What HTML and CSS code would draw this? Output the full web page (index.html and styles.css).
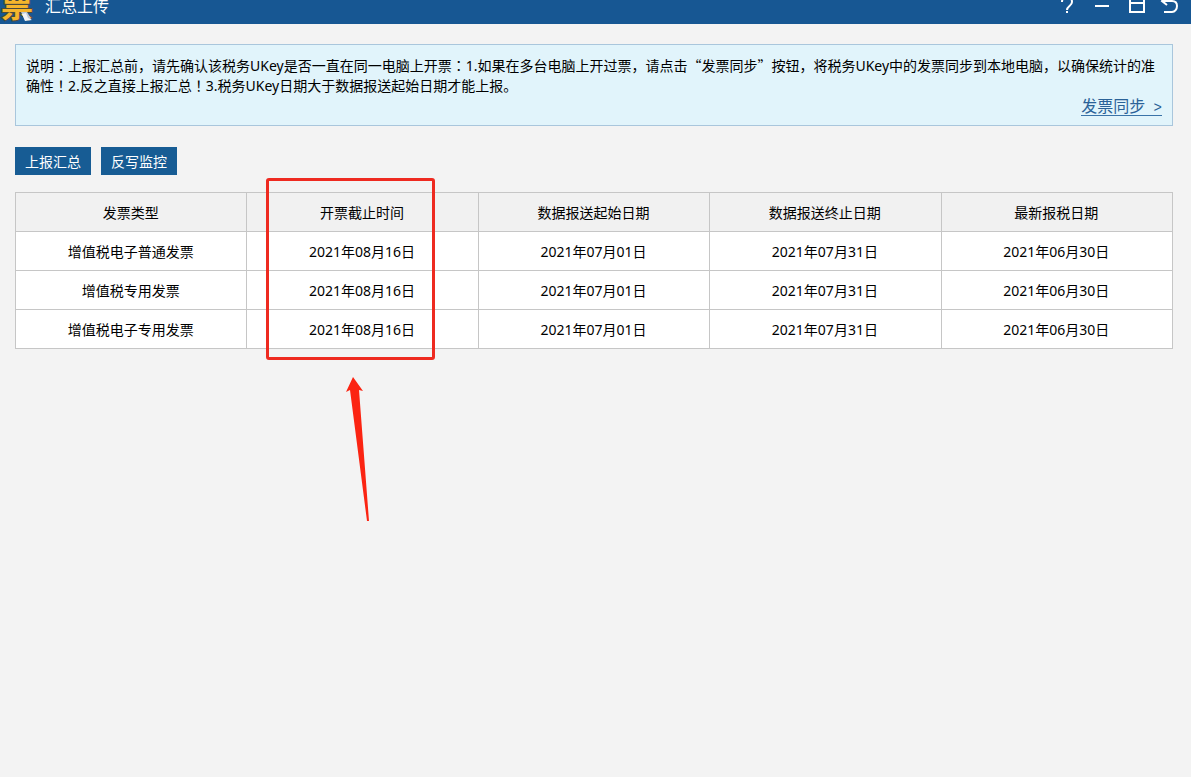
FILE: index.html
```html
<!DOCTYPE html>
<html lang="zh-CN">
<head>
<meta charset="utf-8">
<title>汇总上传</title>
<link rel="stylesheet" href="styles.css">
</head>
<body>
<header class="titlebar">
  <div class="titlebar-row">
    <svg class="logo" viewBox="0 0 34 36" aria-hidden="true">
      <text class="logo-char" x="1" y="29">票</text>
      <path d="M21 24h6l3 5 1 3h-6z" fill="#b9c9d8"/>
      <path d="M22 26l4-1 2 5 4 2-7 1z" fill="#f1f4f7"/>
    </svg>
    <h1 class="title">汇总上传</h1>
    <div class="window-controls">
      <button class="icon-button" type="button" aria-label="帮助">
        <svg viewBox="0 0 24 24"><path d="M7 8c0-3 2-5 5-5s5 2 5 5c0 4-5 4-5 8"/><path d="M12 17v2"/></svg>
      </button>
      <button class="icon-button" type="button" aria-label="最小化">
        <svg viewBox="0 0 24 24"><path d="M5 12h14"/></svg>
      </button>
      <button class="icon-button" type="button" aria-label="最大化">
        <svg viewBox="0 0 24 24"><path d="M5 3h14v15H5zM5 9h14"/></svg>
      </button>
      <button class="icon-button" type="button" aria-label="返回">
        <svg viewBox="0 0 24 24"><path d="M6 2L2 7l5 4M2 7h10c3 0 5 2 5 5s-2 6-5 6H4"/></svg>
      </button>
    </div>
  </div>
</header>

<main class="content">
  <section class="notice">
    <p class="notice-text">说明<span class="mid" lang="ja">：</span>上报汇总前，请先确认该税务UKey是否一直在同一电脑上开票<span class="mid" lang="ja">：</span>1.如果在多台电脑上开过票，请点击<span class="wide">“</span>发票同步<span class="wide">”</span>按钮，将税务UKey中的发票同步到本地电脑，以确保统计的准确性<span class="mid" lang="ja">！</span>2.反之直接上报汇总<span class="mid" lang="ja">！</span>3.税务UKey日期大于数据报送起始日期才能上报。</p>
    <a class="sync-link" href="#">发票同步<span class="chevron"> &gt;</span></a>
  </section>

  <div class="actions">
    <button class="action" type="button">上报汇总</button>
    <button class="action" type="button">反写监控</button>
  </div>

  <div class="table-wrap">
    <table class="report">
      <thead>
        <tr><th>发票类型</th><th>开票截止时间</th><th>数据报送起始日期</th><th>数据报送终止日期</th><th>最新报税日期</th></tr>
      </thead>
      <tbody>
        <tr><td>增值税电子普通发票</td><td>2021年08月16日</td><td>2021年07月01日</td><td>2021年07月31日</td><td>2021年06月30日</td></tr>
        <tr><td>增值税专用发票</td><td>2021年08月16日</td><td>2021年07月01日</td><td>2021年07月31日</td><td>2021年06月30日</td></tr>
        <tr><td>增值税电子专用发票</td><td>2021年08月16日</td><td>2021年07月01日</td><td>2021年07月31日</td><td>2021年06月30日</td></tr>
      </tbody>
    </table>
    <div class="highlight"></div>
    <svg class="pointer" viewBox="0 0 26 146" width="26" height="146" aria-hidden="true">
      <polygon class="pointer-shape" points="8,1 18,15 14,14 24,145 22,145 5,14 1,16"/>
    </svg>
  </div>
</main>
</body>
</html>
```
FILE: styles.css
```css
* {
  box-sizing: border-box;
}

body {
  min-height: 100vh;
  margin: 0;
  background: #f3f3f3;
  color: #000;
  font: 14px/20px "Noto Sans", "Noto Sans CJK SC", sans-serif;
}

button {
  border: 0;
  font: inherit;
  cursor: pointer;
}

.titlebar {
  height: 24px;
  overflow: hidden;
  background: #175793;
  color: #fff;
}

.titlebar-row {
  display: flex;
  align-items: center;
  height: 36px;
  margin-top: -12px;
  padding-right: 7px;
}

.logo {
  width: 34px;
  height: 36px;
}

.logo-char {
  font: 700 32px "Noto Sans CJK SC", sans-serif;
  fill: #f5b52c;
  stroke: #4b4a3c;
  stroke-width: 2px;
  paint-order: stroke;
}

.title {
  margin: 0 auto 0 11px;
  font-size: 16px;
  font-weight: 400;
  line-height: 24px;
}

.window-controls {
  display: flex;
  gap: 11px;
}

.icon-button {
  width: 24px;
  height: 24px;
  padding: 0;
  background: none;
  color: inherit;
}

.icon-button svg {
  display: block;
  width: 24px;
  height: 24px;
  fill: none;
  stroke: currentColor;
  stroke-width: 2px;
}

.content {
  padding: 20px 18px 20px 15px;
}

.notice {
  display: flex;
  flex-direction: column;
  padding: 11px 10px 9px;
  border: 1px solid #a9c6dc;
  background: #e1f4fb;
}

.notice-text {
  margin: 0;
}

.mid {
  font-family: "Noto Sans CJK JP", sans-serif;
  line-height: 1;
}

.wide {
  font-family: "Noto Sans CJK SC", sans-serif;
  line-height: 1;
}

.sync-link {
  align-self: flex-end;
  height: 20px;
  border-bottom: 1px solid #3a73a8;
  color: #2b6298;
  font-size: 16px;
  text-decoration: none;
}

.chevron {
  font-family: "Liberation Mono", monospace;
  font-size: 14px;
  line-height: 1;
  white-space: pre;
}

.actions {
  display: flex;
  gap: 10px;
  margin: 21px 0 17px;
}

.action {
  height: 28px;
  padding: 2px 10px 0;
  background: #175c94;
  color: #fff;
}

.table-wrap {
  position: relative;
}

.report {
  width: 100%;
  border-collapse: collapse;
  table-layout: fixed;
  background: #fff;
}

.report th,
.report td {
  height: 39px;
  padding: 1px 1px 0 0;
  border: 1px solid #c6c6c6;
  font-weight: 400;
  text-align: center;
}

.report th {
  background: #f1f1f1;
}

.highlight {
  position: absolute;
  top: -14px;
  left: 251px;
  width: 169px;
  height: 182px;
  border: 3px solid #ee2a20;
  border-radius: 3px;
}

.pointer {
  position: absolute;
  top: 184px;
  left: 330px;
}

.pointer-shape {
  fill: #fb2412;
}
```
